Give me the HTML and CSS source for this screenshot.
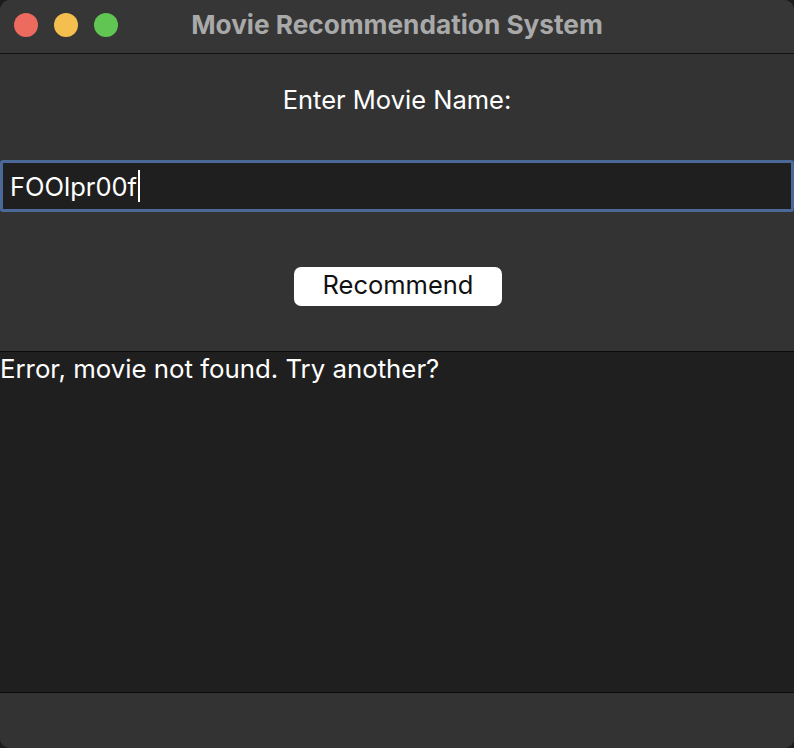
FILE: index.html
```html
<!DOCTYPE html>
<html>
<head>
<meta charset="utf-8">
<link rel="stylesheet" href="styles.css">
</head>
<body>
<div class="window">
  <div class="titlebar">
    <div class="lights">
      <span class="light red"></span>
      <span class="light yellow"></span>
      <span class="light green"></span>
    </div>
    <div class="title">Movie Recommendation System</div>
  </div>
  <div class="content">
    <div class="label">Enter Movie Name:</div>
    <div class="input"><span class="value">FOOlpr00f</span><span class="caret"></span></div>
    <div class="btnrow"><button class="btn">Recommend</button></div>
    <div class="output">Error, movie not found. Try another?</div>
    <div class="footer"></div>
  </div>
</div>
</body>
</html>
```
FILE: styles.css
```css
* { box-sizing: border-box; }
html, body { margin: 0; padding: 0; background: #1c1c1c; }
body { width: 794px; height: 748px; overflow: hidden; font-family: "Inter", "Liberation Sans", sans-serif; }
.window {
  width: 794px; height: 748px;
  background: #333333;
  border-radius: 10px 10px 10px 10px;
  overflow: hidden;
  display: flex; flex-direction: column;
}
.titlebar {
  height: 54px; flex: none;
  background: #363636;
  border-bottom: 1px solid #111;
  position: relative;
  display: flex; align-items: center; justify-content: center;
}
.lights { position: absolute; left: 14px; top: 13px; display: flex; gap: 16px; }
.light { width: 24px; height: 24px; border-radius: 50%; display: block; }
.red { background: #ed6a5e; }
.yellow { background: #f5bf4f; }
.green { background: #61c554; }
.title { color: #a9a9a9; font-weight: 700; font-size: 26.2px; margin-top: -5px; }
.content { flex: 1; display: flex; flex-direction: column; background: #333333; }
.label { color: #fff; font-size: 25.5px; text-align: center; margin-top: 33px; height: 26px; line-height: 26px; }
.input {
  margin-top: 47px; height: 52px; width: 794px;
  background: #1f1f1f; border: 3px solid #4a6898; border-radius: 3px;
  display: flex; align-items: center; padding-left: 7px;
}
.value { color: #fff; font-size: 25.5px; }
.caret { width: 1.5px; height: 32px; background: #fff; margin-left: 1px; }
.btnrow { display: flex; justify-content: center; margin-top: 55px; padding-left: 2px; }
.btn {
  width: 208px; height: 39px; background: #fff; border: none; border-radius: 7px;
  font-family: inherit; font-size: 25.5px; color: #111; padding: 0 0 4px 0; line-height: 35px;
}
.output {
  margin-top: 45px; height: 342px;
  background: #1f1f1f; border-top: 1px solid #0b0b0b; border-bottom: 1px solid #0b0b0b;
  color: #fff; font-size: 25.8px; line-height: 34px; padding-left: 0;
}
.footer { flex: 1; background: #333; }
```
